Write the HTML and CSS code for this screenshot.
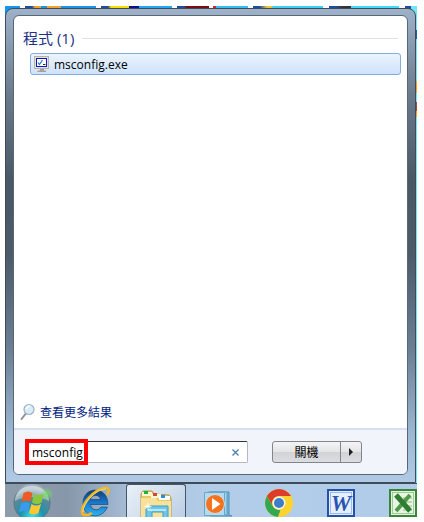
FILE: index.html
```
<!DOCTYPE html>
<html lang="zh-Hant">
<head>
  <meta charset="UTF-8">
  <meta name="viewport" content="width=device-width, initial-scale=1">
  <title>msconfig</title>
  <link rel="stylesheet" href="styles.css">
</head>
<body>

  <div class="desktop">
    <main class="start-menu">
      <div class="panel">
        <section class="results">
          <h1 class="group-title">程式 (1)</h1>
          <a class="result" href="#">
            <svg width="16" height="16" viewBox="0 0 16 16">
              <rect x="0.5" y="0.5" width="14" height="12" fill="#e4e1d6" stroke="#b5b2a8"/>
              <rect x="2.500" y="2.500" width="10" height="8" fill="#fff" stroke="#1414c8"/>
              <path d="M4 6.500l1.500 2 3-4.500" fill="none" stroke="#1e78d2" stroke-width="1.200"/>
              <path d="M9 8.500h2.500" stroke="#333"/>
              <path d="M6 13h4v1.500h2V16H3.500v-1.500H6z" fill="#a3a39f"/>
            </svg>
            <span>msconfig.exe</span>
          </a>
        </section>

        <a class="more" href="#">
          <svg width="16" height="18" viewBox="0 0 16 18">
            <path d="M1.500 16l4-5" stroke="#8b8f96" stroke-width="2" stroke-linecap="round"/>
            <circle cx="9" cy="6.500" r="5" fill="#d8ecfa" stroke="#9db0c4" stroke-width="1.200"/>
            <path d="M6 6a3.200 3.200 0 0 1 4-2.500" fill="none" stroke="#fff" stroke-width="1.500"/>
          </svg>
          <span>查看更多結果</span>
        </a>

        <div class="footer">
          <form class="search">
            <input type="text" id="search" value="msconfig" aria-label="搜尋">
            <button type="button" class="clear" aria-label="清除">
              <svg width="9" height="9" viewBox="0 0 9 9"><path d="M1.500 1.500l6 6M7.500 1.500l-6 6" stroke="#4a7ba6" stroke-width="1.200"/></svg>
            </button>
            <span class="highlight"></span>
          </form>
          <div class="power">
            <button type="button" class="shutdown">關機</button>
            <button type="button" class="arrow" aria-label="更多選項">
              <svg width="4" height="8" viewBox="0 0 4 8"><path d="M0 0l4 4-4 4z" fill="#222"/></svg>
            </button>
          </div>
        </div>
      </div>
    </main>

    <nav class="taskbar">
      <button type="button" class="task" aria-label="開始">
        <svg width="42" height="34" viewBox="0 0 42 34">
          <defs>
            <radialGradient id="orb" cx="0.5" cy="0.9" r="0.8">
              <stop offset="0" stop-color="#38e4f4"/>
              <stop offset="0.4" stop-color="#1f93ad"/>
              <stop offset="0.8" stop-color="#5e8798"/>
              <stop offset="1" stop-color="#a9bcc6"/>
            </radialGradient>
            <radialGradient id="glow">
              <stop offset="0" stop-color="#6ee05c"/>
              <stop offset="1" stop-color="#6ee05c" stop-opacity="0"/>
            </radialGradient>
          </defs>
          <circle cx="21" cy="19" r="18" fill="url(#orb)" stroke="#5b7684"/>
          <path d="M4 17a17 17 0 0 1 34 0c-9-5-25-5-34 0z" fill="#fff" opacity="0.35"/>
          <ellipse cx="36" cy="10" rx="7" ry="7" fill="url(#glow)" opacity="0.8"/>
          <path d="M12.500 9c3-2 6-2 9 0l-2 9c-3-2-6-2-9 0z" fill="#ee5a24"/>
          <path d="M23 9.500c3 2 6 2 10 0l-2.500 9c-3 2-6 2-9.500 0z" fill="#8cc63f"/>
          <path d="M10 19.500c3-2 6-2 9 0l-2.500 9c-3-2-5-2-8.500 0z" fill="#3a9bea"/>
          <path d="M20.500 20c3 2 6 2 9.500 0L27.500 29c-3 2-6 2-9.500 0z" fill="#fdc82f"/>
        </svg>
      </button>
      <button type="button" class="task" aria-label="Internet Explorer">
        <svg width="34" height="34" viewBox="0 0 34 34">
          <defs>
            <linearGradient id="ie" x2="0" y2="1">
              <stop offset="0" stop-color="#123d78"/>
              <stop offset="0.5" stop-color="#1878cc"/>
              <stop offset="1" stop-color="#2bb5f0"/>
            </linearGradient>
          </defs>
          <path d="M30 20.500H12.500c.5 6 8 7 10.500 2.500h6.500C24 36.500 5 34 5 19 5 2 30 1 30 20.500zM12.500 15.500h10c-.5-5.500-9.500-5.500-10 0z" fill="url(#ie)" stroke="#103a70" stroke-width="0.600"/>
          <path d="M29 11c3-5 2-8-3-7C16 6 4 19 4 28c0 4 5 4 10 1" fill="none" stroke="#f4b71c" stroke-width="2.400"/>
          <path d="M28 5C18 5 5 19 5 28" fill="none" stroke="#ffe680" stroke-width="0.800"/>
        </svg>
      </button>
      <button type="button" class="task active" aria-label="檔案總管">
        <svg width="34" height="34" viewBox="0 0 34 34">
          <path d="M2 34V9l2-3h9l2 3 15 1 2 3v21z" fill="#e9c967" stroke="#b5964a"/>
          <path d="M3 7h10v4H3z" fill="#fff6d0"/><path d="M5 6h4v3H5z" fill="#16b83a"/>
          <path d="M12 9h10v4H12z" fill="#fff6d0"/><path d="M14 8h4v3h-4z" fill="#d8452e"/>
          <path d="M20 11h11v4H20z" fill="#fff"/><path d="M22 10h4v3h-4z" fill="#2b8fe0"/>
          <path d="M2 13h15l2 3h13v18H2z" fill="#f6e29a"/>
          <path d="M7 34V24l4-3h18v13h-5v-7H13v7z" fill="#6fc6e8" stroke="#3e9ec8"/>
          <path d="M9 25h18" stroke="#cdf2fc" stroke-width="1.500"/>
          <path d="M9 18v7M5.500 21.500h7M7 19.500l4 4M11 19.500l-4 4" stroke="#fff" stroke-width="0.800"/>
        </svg>
      </button>
      <button type="button" class="task" aria-label="Windows Media Player">
        <svg width="34" height="34" viewBox="0 0 34 34">
          <path d="M10 8h19v23l3 1H10z" fill="#79b5d6" stroke="#4d93b8"/>
          <path d="M8 8h19v23H8z" fill="#a5d4ea" stroke="#5b9fc2"/>
          <path d="M4.500 8.500h20v23h-20z" fill="#b6daed" stroke="#68a7ca"/>
          <circle cx="15" cy="20" r="9.500" fill="#f37321" stroke="#d0dfe8"/>
          <path d="M12 14l8.500 6-8.500 6z" fill="#fff"/>
        </svg>
      </button>
      <button type="button" class="task" aria-label="Chrome">
        <svg width="28" height="34" viewBox="0 0 28 34">
          <circle cx="14" cy="19" r="14" fill="#fdd32e"/>
          <path d="M1.900 12a14 14 0 0 1 24.200 0H14a7 7 0 0 0-6.500 9.500z" fill="#dd3b2c"/>
          <path d="M1.900 12l6 10.500c1.500 2.500 4 3.500 7.500 3.500L13 33A14 14 0 0 1 1.900 12z" fill="#33a852"/>
          <circle cx="14" cy="19" r="6.500" fill="#f5f5f5"/>
          <circle cx="14" cy="19" r="5" fill="#3c7fc8"/>
        </svg>
      </button>
      <button type="button" class="task" aria-label="Word">
        <svg width="28" height="34" viewBox="0 0 28 34">
          <rect x="1" y="6" width="26" height="26" fill="#e4edfb" stroke="#2452a8" stroke-width="2"/>
          <rect x="3.500" y="8.500" width="21" height="21" fill="#e6effc" stroke="#9dbbe8"/>
          <text x="14" y="27" text-anchor="middle" class="word-letter">W</text>
        </svg>
      </button>
      <button type="button" class="task" aria-label="Excel">
        <svg width="28" height="34" viewBox="0 0 28 34">
          <rect x="1" y="6" width="26" height="26" fill="#e4f2de" stroke="#37863a" stroke-width="2"/>
          <rect x="3.500" y="8.500" width="21" height="21" fill="#e9f5e4" stroke="#9ccb94"/>
          <path d="M14 14h9M16 18h7M18 22h5M14 26h9" stroke="#8abf84"/>
          <path d="M21 11L7 27" stroke="#4e9a48" stroke-width="4"/>
          <path d="M7 11l14 16" stroke="#2e7d32" stroke-width="5"/>
        </svg>
      </button>
    </nav>
  </div>

</body>
</html>
```
FILE: styles.css
```
* {
  box-sizing: border-box;
}

body {
  margin: 0;
  padding: 6px 7px 5px 5px;
  min-height: 100vh;
  display: flex;
  background: #fff;
  font-family: "Open Sans", "Noto Sans CJK TC", sans-serif;
  font-size: 12px;
  color: #000;
}

a {
  color: inherit;
  text-decoration: none;
}

button {
  border: none;
  padding: 0;
  background: none;
  font: inherit;
}

svg {
  display: block;
  flex: none;
}

/* only slivers of the wallpaper and its icons show around the menu */
.desktop {
  flex: 1;
  min-width: 0;
  display: flex;
  flex-direction: column;
  padding-top: 2px;
  background:
    linear-gradient(#6fe6fb 8%, #1c5fa8 8% 11%, #6fe6fb 11% 25%, #f7a21a 25% 29%, #6fe6fb 29% 32%, #a04a3c 32% 35%, #f7a21a 35% 37%, #6fe6fb 37%) right top / 2px 300px no-repeat,
    linear-gradient(90deg, #1595ee 15px, #fff 15px 20px, #1f4f9c 20px 27px, #f3a32b 30px 36px, #1595ee 36px 42px, #f3a32b 42px 56px, #1595ee 56px 91px, #fff 91px 96px, #1f4f9c 96px 103px, #f7e000 106px 124px, #10108c 124px 134px, #22a7f3 134px 167px, #fff 167px 172px, #1f4f9c 172px 179px, #7a0d10 182px 204px, #fff 204px 208px, #e02020 208px 211px, #33bff5 211px 243px, #fff 243px 248px, #1f4f9c 248px 255px, #f3c52b 262px 266px, #3bd0f8 268px 318px, #fff 318px 324px, #1f4f9c 324px 331px, #333 338px 346px, #3fdcfb 346px 394px, #fff 394px 400px, #1f4f9c 400px 406px, #6fe6fb 406px) #6fe6fb;
}

.start-menu {
  flex: 1;
  display: flex;
  margin-right: 1px;
  padding: 6px 7px 7px;
  border: 1px solid #3f4b58;
  border-radius: 8px 8px 0 0;
  background: linear-gradient(#9db2ca, #6c7b8c 18%, #4a5866 36%, #4d5b69 52%, #6b7f95 72%, #9db8d3 90%, #b0cae6);
}

.panel {
  flex: 1;
  min-width: 0;
  display: flex;
  flex-direction: column;
  border: 1px solid #596673;
  border-radius: 6px;
  background: #fff;
  overflow: hidden;
}

.results {
  flex: 1;
  padding: 12px 6px 0 16px;
}

.group-title {
  display: flex;
  align-items: center;
  gap: 8px;
  margin: 0 3px 5px -7px;
  font-size: 15px;
  line-height: 20px;
  font-weight: normal;
  color: #1e3287;
}

.group-title::after {
  content: "";
  flex: 1;
  height: 1px;
  background: #e0e0e0;
}

.result {
  display: flex;
  align-items: center;
  gap: 4px;
  height: 22px;
  padding: 0 3px;
  border: 1px solid #84acdd;
  border-radius: 3px;
  background: linear-gradient(#ebf4fe, #cfe3fc);
}

.more {
  display: flex;
  align-items: center;
  gap: 4px;
  height: 32px;
  padding: 0 6px;
  color: #001a80;
}

.footer {
  display: flex;
  align-items: center;
  gap: 24px;
  height: 46px;
  padding: 0 45px 0 11px;
  border-top: 2px solid #d6e0ee;
  background: #f1f4fb;
}

.search {
  position: relative;
  flex: 1;
  min-width: 0;
  display: flex;
  align-items: center;
  height: 22px;
  border: 1px solid #b4b8be;
  border-top-color: #333;
  border-radius: 2px;
  background: #fff;
}

.search input {
  flex: 1;
  min-width: 0;
  padding: 0 6px;
  border: none;
  outline: none;
  background: none;
  font: inherit;
}

.clear {
  padding: 0 7px;
}

/* red frame around the typed command */
.highlight {
  position: absolute;
  top: -3px;
  left: -1px;
  width: 63px;
  height: 26px;
  border: 4px solid #f00;
}

.power {
  display: flex;
  height: 22px;
  border: 1px solid #82858a;
  border-radius: 3px;
  background: linear-gradient(#f4f4f5, #e4e5e7 48%, #d2d3d6 52%, #dcdde0);
}

.shutdown {
  width: 67px;
}

.arrow {
  display: flex;
  align-items: center;
  justify-content: center;
  width: 21px;
  border-left: 1px solid #82858a;
}

.taskbar {
  display: flex;
  height: 34px;
  border-top: 1px solid #3f4b58;
  overflow: hidden;
  background: linear-gradient(90deg, #8d9cab, #8797aa 15%, #a5bdd6 30%, #b3cde9 50%, #b0cce9);
}

.task {
  flex: 0 0 62px;
  display: flex;
  justify-content: center;
}

.task:first-child {
  flex-basis: 59px;
  padding-right: 5px;
}

.task.active {
  flex-basis: 60px;
  border: 1px solid #46566a;
  border-bottom: none;
  border-radius: 3px 3px 0 0;
  background: linear-gradient(135deg, #eaf1f8, #bccfe4);
}

.word-letter {
  font-family: "Liberation Serif", serif;
  font-size: 23px;
  font-weight: bold;
  font-style: italic;
  fill: #2a56b0;
}
```
